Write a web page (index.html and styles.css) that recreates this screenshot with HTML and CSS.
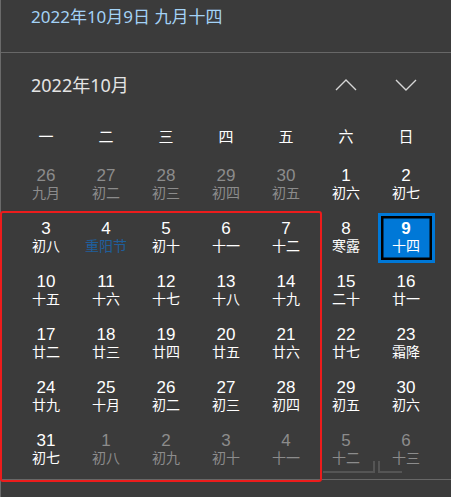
FILE: index.html
```html
<!DOCTYPE html>
<html lang="zh-CN">
<head>
<meta charset="utf-8">
<title>日历</title>
<link rel="stylesheet" href="styles.css">
</head>
<body>
<div class="app">
  <div class="title">2022年10月9日 九月十四</div>
  <div class="month-row">
    <div class="month">2022年10月</div>
    <div class="navs">
      <span class="nav"><svg width="22" height="12" viewBox="0 0 22 12"><path d="M1 11 L11 1 L21 11" fill="none" stroke="#d6d6d6" stroke-width="1.4"/></svg></span>
      <span class="nav"><svg width="22" height="12" viewBox="0 0 22 12"><path d="M1 1 L11 11 L21 1" fill="none" stroke="#d6d6d6" stroke-width="1.4"/></svg></span>
    </div>
  </div>
  <div class="weekdays">
    <span>一</span><span>二</span><span>三</span><span>四</span><span>五</span><span>六</span><span>日</span>
  </div>
  <div class="days">
    <div class="day other"><b>26</b><i>九月</i></div>
    <div class="day other"><b>27</b><i>初二</i></div>
    <div class="day other"><b>28</b><i>初三</i></div>
    <div class="day other"><b>29</b><i>初四</i></div>
    <div class="day other"><b>30</b><i>初五</i></div>
    <div class="day"><b>1</b><i>初六</i></div>
    <div class="day"><b>2</b><i>初七</i></div>

    <div class="day"><b>3</b><i>初八</i></div>
    <div class="day"><b>4</b><i class="fest">重阳节</i></div>
    <div class="day"><b>5</b><i>初十</i></div>
    <div class="day"><b>6</b><i>十一</i></div>
    <div class="day"><b>7</b><i>十二</i></div>
    <div class="day"><b>8</b><i>寒露</i></div>
    <div class="day today"><b>9</b><i>十四</i></div>

    <div class="day"><b>10</b><i>十五</i></div>
    <div class="day"><b>11</b><i>十六</i></div>
    <div class="day"><b>12</b><i>十七</i></div>
    <div class="day"><b>13</b><i>十八</i></div>
    <div class="day"><b>14</b><i>十九</i></div>
    <div class="day"><b>15</b><i>二十</i></div>
    <div class="day"><b>16</b><i>廿一</i></div>

    <div class="day"><b>17</b><i>廿二</i></div>
    <div class="day"><b>18</b><i>廿三</i></div>
    <div class="day"><b>19</b><i>廿四</i></div>
    <div class="day"><b>20</b><i>廿五</i></div>
    <div class="day"><b>21</b><i>廿六</i></div>
    <div class="day"><b>22</b><i>廿七</i></div>
    <div class="day"><b>23</b><i>霜降</i></div>

    <div class="day"><b>24</b><i>廿九</i></div>
    <div class="day"><b>25</b><i>十月</i></div>
    <div class="day"><b>26</b><i>初二</i></div>
    <div class="day"><b>27</b><i>初三</i></div>
    <div class="day"><b>28</b><i>初四</i></div>
    <div class="day"><b>29</b><i>初五</i></div>
    <div class="day"><b>30</b><i>初六</i></div>

    <div class="day"><b>31</b><i>初七</i></div>
    <div class="day other"><b>1</b><i>初八</i></div>
    <div class="day other"><b>2</b><i>初九</i></div>
    <div class="day other"><b>3</b><i>初十</i></div>
    <div class="day other"><b>4</b><i>十一</i></div>
    <div class="day other ghost-r"><b>5</b><i>十二</i></div>
    <div class="day other ghost-l"><b>6</b><i>十三</i></div>
  </div>
  <div class="bottom"></div>
  <div class="mark"></div>
</div>
</body>
</html>
```

FILE: styles.css
```css
* { box-sizing: border-box; }
html, body { margin: 0; padding: 0; }
body {
  background: #3b3b3b;
  font-family: "Noto Sans", "Noto Sans CJK SC", sans-serif;
  color: #fff;
  width: 451px;
  height: 497px;
  overflow: hidden;
}
.app {
  position: relative;
  height: 497px;
  border-left: 1px solid #6a6a6a;
}
.title {
  height: 53px;
  padding: 5px 0 0 30px;
  font-size: 17px;
  line-height: 24px;
  color: #a3d2f6;
  border-bottom: 1px solid #676767;
}
.month-row {
  height: 64px;
  display: flex;
  align-items: center;
  justify-content: space-between;
  padding: 0 0 0 30px;
}
.month {
  font-size: 18px;
  color: #e4e4e4;
  line-height: 24px;
}
.navs {
  display: flex;
  margin-right: 15px;
}
.nav {
  width: 60px;
  height: 24px;
  display: flex;
  align-items: center;
  justify-content: center;
}
.weekdays {
  display: grid;
  grid-template-columns: repeat(7, 60px);
  margin-left: 15px;
  height: 36px;
  align-items: center;
  margin-bottom: 5px;
}
.weekdays span {
  text-align: center;
  font-size: 15px;
  color: #fff;
}
.days {
  display: grid;
  grid-template-columns: repeat(7, 60px);
  grid-auto-rows: 53px;
  margin-left: 15px;
}
.day {
  position: relative;
  display: flex;
  flex-direction: column;
  align-items: center;
  justify-content: center;
  margin: 1.5px;
  font-family: "Liberation Sans", "Noto Sans CJK SC", sans-serif;
}
.day b {
  font-weight: normal;
  font-size: 17px;
  line-height: 18px;
}
.day i {
  font-style: normal;
  font-size: 14px;
  line-height: 17px;
  margin-top: 0.5px;
  white-space: nowrap;
}
.day.other { color: #8c8c8c; }
.day .fest { color: #1f5f9c; }
.day.today {
  background: #0078d7;
  border: 3px solid #0078d7;
  box-shadow: inset 0 0 0 2.5px #000;
}
.day.today b { font-weight: bold; }
.ghost-r::after, .ghost-l::after {
  content: "";
  position: absolute;
  bottom: 2px;
  height: 10px;
  border-bottom: 2px solid #555;
}
.ghost-r::after {
  right: 0;
  width: 50px;
  border-right: 2px solid #555;
}
.ghost-l::after {
  left: 0;
  width: 22px;
  border-left: 2px solid #555;
}
.bottom {
  margin-top: 3px;
  border-top: 1px solid #676767;
}
.mark {
  position: absolute;
  left: -1px;
  top: 211px;
  width: 322px;
  height: 271px;
  border: 2px solid #ec1c1c;
  border-radius: 3px;
  pointer-events: none;
}
```
